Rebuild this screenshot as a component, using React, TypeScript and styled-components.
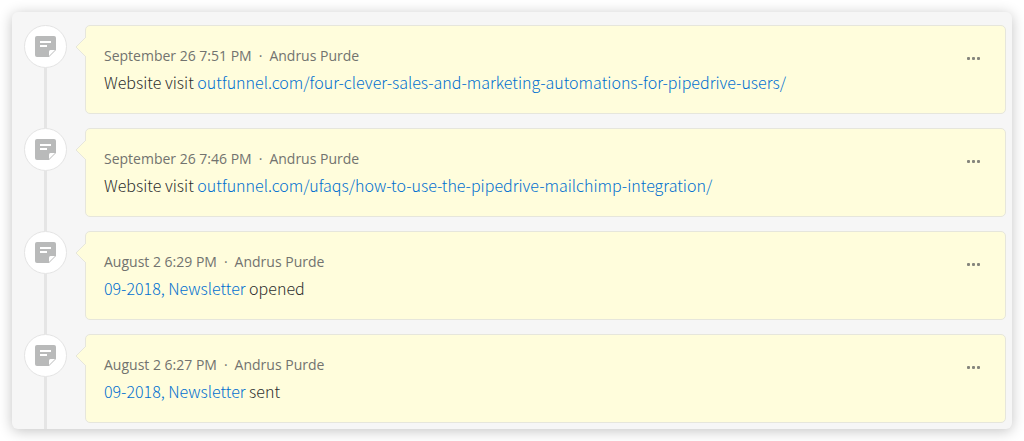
import React from "react";
import styled, { createGlobalStyle } from "styled-components";

const GlobalStyle = createGlobalStyle`
  *, *::before, *::after { box-sizing: border-box; }
  body { margin: 0; background: #fff; }
`;

const Panel = styled.main`
  margin: 12px;
  padding: 13px 6px 0 12px;
  border-radius: 6px;
  background: #f6f6f6;
  box-shadow: 0 2px 14px rgba(0, 0, 0, 0.24);
`;

const Timeline = styled.ol`
  margin: 0;
  padding: 0;
  list-style: none;
`;

const Entry = styled.li`
  display: flex;
  gap: 18px;
`;

const Rail = styled.div`
  display: flex;
  flex: none;
  flex-direction: column;
  align-items: center;
  width: 43px;

  &::after {
    content: "";
    flex: 1;
    width: 3px;
    background: #e5e5e5;
  }
`;

const Marker = styled.span`
  display: flex;
  align-items: center;
  justify-content: center;
  width: 43px;
  height: 43px;
  border: 1px solid #e4e4e4;
  border-radius: 50%;
  background: #fff;
`;

const Card = styled.article`
  position: relative;
  display: flex;
  flex: 1;
  justify-content: space-between;
  min-width: 0;
  margin-bottom: 14px;
  padding: 20px 20px 18px 18px;
  border: 1px solid #e6e6dc;
  border-radius: 5px;
  background: #fffddc;

  ${Entry}:last-child & {
    margin-bottom: 6px;
  }
`;

const Pointer = styled.svg`
  position: absolute;
  top: 10px;
  left: -11px;
`;

const Content = styled.div`
  min-width: 0;
`;

const Meta = styled.p`
  margin: 0;
  color: #72736f;
  font: 14px/20px "Open Sans", sans-serif;
`;

const Separator = styled.span`
  margin: 0 7px;
`;

const Body = styled.p`
  margin: 3px 0 0;
  color: #2c2d2e;
  font: 300 16px/26px "Noto Sans CJK SC", sans-serif;
  overflow-wrap: anywhere;
`;

const Link = styled.a`
  color: #006fd0;
  text-decoration: none;
`;

const MenuButton = styled.button`
  display: flex;
  flex: none;
  align-items: center;
  justify-content: center;
  width: 24px;
  height: 24px;
  padding: 0;
  border: 0;
  background: none;
  color: #85857c;
  cursor: pointer;
`;

const NoteIcon = () => (
  <svg width="21" height="21" viewBox="0 0 21 21" aria-hidden="true">
    <path
      fill="#b9baba"
      d="M2 0H19Q21 0 21 2V14L14 21H2Q0 21 0 19V2Q0 0 2 0Z"
    />
    <path fill="#fff" d="M14 20V15.5Q14 14 15.5 14H20Z" />
    <path fill="#fff" d="M5 5H16V7H5ZM5 9H12V11H5Z" />
  </svg>
);

const DotsIcon = () => (
  <svg width="13" height="3" viewBox="0 0 13 3" fill="currentColor" aria-hidden="true">
    <rect width="3" height="3" rx="1" />
    <rect x="5" width="3" height="3" rx="1" />
    <rect x="10" width="3" height="3" rx="1" />
  </svg>
);

type Activity = {
  time: string;
  before?: string;
  link: string;
  href: string;
  after?: string;
};

const activities: Activity[] = [
  {
    time: "September 26 7:51 PM",
    before: "Website visit ",
    link: "outfunnel.com/four-clever-sales-and-marketing-automations-for-pipedrive-users/",
    href: "https://outfunnel.com/four-clever-sales-and-marketing-automations-for-pipedrive-users/",
  },
  {
    time: "September 26 7:46 PM",
    before: "Website visit ",
    link: "outfunnel.com/ufaqs/how-to-use-the-pipedrive-mailchimp-integration/",
    href: "https://outfunnel.com/ufaqs/how-to-use-the-pipedrive-mailchimp-integration/",
  },
  { time: "August 2 6:29 PM", link: "09-2018, Newsletter", href: "#newsletter", after: " opened" },
  { time: "August 2 6:27 PM", link: "09-2018, Newsletter", href: "#newsletter", after: " sent" },
];

export default function App() {
  return (
    <>
      <GlobalStyle />
      <Panel>
        <Timeline>
          {activities.map((item) => (
            <Entry key={item.time}>
              <Rail>
                <Marker>
                  <NoteIcon />
                </Marker>
              </Rail>
              <Card>
                <Pointer width="12" height="22" viewBox="0 0 12 22" aria-hidden="true">
                  <path d="M12 0L1 11L12 22Z" fill="#fffddc" />
                  <path d="M11 1L1 11L11 21" fill="none" stroke="#e6e6dc" />
                </Pointer>
                <Content>
                  <Meta>
                    {item.time}
                    <Separator>·</Separator>
                    Andrus Purde
                  </Meta>
                  <Body>
                    {item.before}
                    <Link href={item.href}>{item.link}</Link>
                    {item.after}
                  </Body>
                </Content>
                <MenuButton type="button" aria-label="More actions">
                  <DotsIcon />
                </MenuButton>
              </Card>
            </Entry>
          ))}
        </Timeline>
      </Panel>
    </>
  );
}
